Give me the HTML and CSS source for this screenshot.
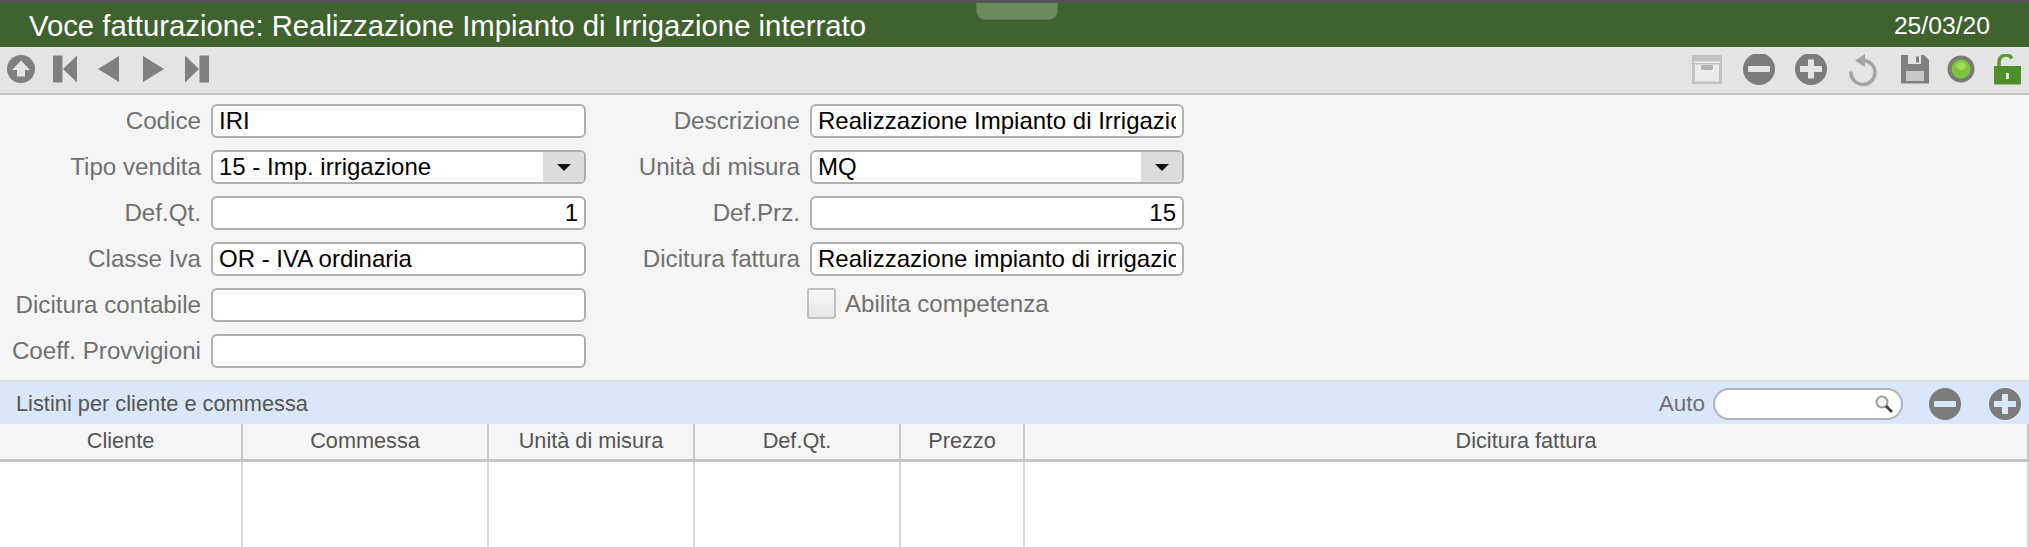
FILE: index.html
```html
<!DOCTYPE html>
<html lang="it">
<head>
<meta charset="utf-8">
<title>Voce fatturazione</title>
<link rel="stylesheet" href="styles.css">
</head>
<body>
<div class="page">
  <header class="titlebar">
    <div class="grabber"></div>
    <h1 class="title">Voce fatturazione: Realizzazione Impianto di Irrigazione interrato</h1>
    <span class="date">25/03/20</span>
  </header>

  <nav class="toolbar">
    <div class="tools-left">
      <svg class="icon" viewBox="0 0 42 32"><circle cx="21" cy="15" r="14" fill="#808080"/><path d="M21 6.500 30 16h-5v6.500h-8V16h-5z" fill="#e4e4e4"/></svg>
      <svg class="icon" viewBox="0 0 42 32"><path d="M9 1.500h9.500v27H9zM33 1.500v27L19 15z" fill="#808080"/></svg>
      <svg class="icon" viewBox="0 0 42 32"><path d="M31 2v26L10 15z" fill="#808080"/></svg>
      <svg class="icon" viewBox="0 0 42 32"><path d="M11 2v26l21-13z" fill="#808080"/></svg>
      <svg class="icon" viewBox="0 0 42 32"><path d="M23.500 1.500H33v27h-9.500zM9 1.500v27L23 15z" fill="#808080"/></svg>
    </div>
    <div class="tools-right">
      <div class="tool-group">
        <svg class="icon-r" viewBox="0 0 36 32"><path d="M3 1h30v29H3z" fill="#c2c2c2"/><path d="M5 7.500h26V9H5zM6 10.500h24V27.500H6z" fill="#ececec"/><path d="M12 11h12v3.500a1.500 1.500 0 0 1-1.500 1.500h-9a1.500 1.500 0 0 1-1.500-1.500z" fill="#b4b4b4"/></svg>
        <svg class="icon-r" viewBox="0 0 36 32"><circle cx="18" cy="15" r="16" fill="#7c7c7c"/><rect x="7" y="12" width="22" height="6" rx="1" fill="#e4e4e4"/></svg>
        <svg class="icon-r" viewBox="0 0 36 32"><circle cx="18" cy="15" r="16" fill="#7c7c7c"/><path d="M15 5.500h6V12h8v6h-8v6.500h-6V18H7v-6h8z" fill="#e4e4e4"/></svg>
        <svg class="icon-r" viewBox="0 0 36 32"><path d="M18 6.500a12 12 0 1 1-12 11" fill="none" stroke="#a4a4a4" stroke-width="3.500"/><path d="M20 0v13L10 6.500z" fill="#a4a4a4"/></svg>
      </div>
      <div class="tool-group tight">
        <svg class="icon-r" viewBox="0 0 36 32"><path d="M4 1h23l5 5v23.500H4z" fill="#808080"/><path d="M11 1h13v9H11z" fill="#e4e4e4"/><path d="M19 2.500h3v6h-3z" fill="#808080"/><path d="M9 17h18v10H9z" fill="#c8c8c8"/></svg>
        <svg class="icon-r" viewBox="0 0 36 32"><circle cx="18" cy="15" r="13.500" fill="#787c74"/><circle cx="18" cy="15" r="9.500" fill="#7dc53a"/><ellipse cx="18" cy="12" rx="5" ry="4" fill="#9adf50"/></svg>
        <svg class="icon-r" viewBox="0 0 36 32"><path d="M10 13V8a7 7 0 0 1 13-3.500" fill="none" stroke="#5a9a2e" stroke-width="3.500"/><path d="M5 12h27v17a1.500 1.500 0 0 1-1.500 1.500h-24A1.500 1.500 0 0 1 5 29z" fill="#4f8f29"/><rect x="17" y="19" width="3" height="6" fill="#e4e4e4"/></svg>
      </div>
    </div>
  </nav>

  <form class="form">
    <label class="lbl">Codice</label>
    <input class="field" readonly value="IRI">
    <label class="lbl">Descrizione</label>
    <input class="field" readonly value="Realizzazione Impianto di Irrigazione interrato">

    <label class="lbl">Tipo vendita</label>
    <div class="combo"><span class="combo-val">15 - Imp. irrigazione</span><span class="combo-btn"><i class="caret"></i></span></div>
    <label class="lbl">Unità di misura</label>
    <div class="combo"><span class="combo-val">MQ</span><span class="combo-btn"><i class="caret"></i></span></div>

    <label class="lbl">Def.Qt.</label>
    <input class="field num" readonly value="1">
    <label class="lbl">Def.Prz.</label>
    <input class="field num" readonly value="15">

    <label class="lbl">Classe Iva</label>
    <input class="field" readonly value="OR - IVA ordinaria">
    <label class="lbl">Dicitura fattura</label>
    <input class="field" readonly value="Realizzazione impianto di irrigazione interrato">

    <label class="lbl">Dicitura contabile</label>
    <input class="field" readonly>
    <span></span>
    <div class="check-row"><span class="check"></span><span class="check-text">Abilita competenza</span></div>

    <label class="lbl">Coeff. Provvigioni</label>
    <input class="field" readonly>
  </form>

  <section class="band">
    <span class="band-title">Listini per cliente e commessa</span>
    <div class="band-tools">
      <span class="auto">Auto</span>
      <div class="search">
        <svg class="lens" viewBox="0 0 18 18"><circle cx="7" cy="7" r="5.500" fill="#f4f4f4" stroke="#9a9a9a" stroke-width="2"/><path d="m11 11 6 6" stroke="#444" stroke-width="3"/></svg>
      </div>
      <div class="band-btns">
        <svg class="icon-b" viewBox="0 0 32 32"><circle cx="16" cy="16" r="16" fill="#7c7c7c"/><rect x="5" y="13" width="22" height="6" rx="1" fill="#dae7f9"/></svg>
        <svg class="icon-b" viewBox="0 0 32 32"><circle cx="16" cy="16" r="16" fill="#7c7c7c"/><path d="M13 6h6v7h8v6h-8v7h-6v-7H5v-6h8z" fill="#dae7f9"/></svg>
      </div>
    </div>
  </section>

  <section class="table">
    <div class="th">Cliente</div>
    <div class="th">Commessa</div>
    <div class="th">Unità di misura</div>
    <div class="th">Def.Qt.</div>
    <div class="th">Prezzo</div>
    <div class="th">Dicitura fattura</div>
    <div class="td"></div>
    <div class="td"></div>
    <div class="td"></div>
    <div class="td"></div>
    <div class="td"></div>
    <div class="td"></div>
  </section>
</div>
</body>
</html>
```

FILE: styles.css
```css
* { box-sizing: border-box; }
html, body { margin: 0; height: 100%; overflow: hidden; }
body { font-family: "Liberation Sans", Arial, sans-serif; background: #f5f5f5; }
.page { height: 547px; display: flex; flex-direction: column; }

.titlebar {
  position: relative;
  height: 47px;
  flex: none;
  background: #3f632f;
  border-top: 3px solid #555555;
  color: #fff;
  display: flex;
  align-items: center;
  justify-content: space-between;
  padding: 2px 39px 0 29px;
}
.title { margin: 0; font-size: 29.3px; font-weight: 400; line-height: 38px; }
.date { font-size: 24.7px; }
.grabber {
  position: absolute;
  top: 0;
  left: 976px;
  width: 82px;
  height: 17px;
  background: #6a8a60;
  border: 1px solid #587a4c;
  border-top: 0;
  border-radius: 0 0 9px 9px;
}

.toolbar {
  height: 48px;
  flex: none;
  background: #e4e4e4;
  border-bottom: 2px solid #c4c4c4;
  display: flex;
  align-items: center;
  justify-content: space-between;
  padding: 0 4px 0 0;
}
.tools-left { display: flex; gap: 2px; }
.tools-right { display: flex; gap: 16px; }
.tool-group { display: flex; gap: 16px; }
.tool-group.tight { gap: 10px; }
.icon { width: 42px; height: 32px; display: block; filter: blur(.6px); }
.icon-r { width: 36px; height: 32px; display: block; filter: blur(.6px); }

.form {
  height: 285px;
  flex: none;
  display: grid;
  grid-template-columns: 201px 385px 214px 384px;
  grid-auto-rows: 46px;
  padding-top: 3px;
  align-items: center;
  background: #f5f5f5;
}
.lbl { font-size: 24.2px; color: #707070; text-align: right; white-space: nowrap; }
.form > .field, .form > .combo { margin-left: 10px; }
.field, .combo {
  height: 34px;
  border: 2px solid #b0b0b0;
  border-radius: 6px;
  background: #fff;
  font-family: inherit;
  font-size: 24px;
  color: #000;
}
.field { padding: 0 6px; outline: none; width: calc(100% - 10px); }
.num { text-align: right; }
.combo { display: flex; align-items: center; overflow: hidden; width: calc(100% - 10px); }
.combo-val { flex: 1; padding-left: 6px; }
.combo-btn { width: 41px; height: 100%; background: #dcdcdc; display: flex; align-items: center; justify-content: center; }
.caret { width: 0; height: 0; border-left: 7px solid transparent; border-right: 7px solid transparent; border-top: 7px solid #111; }

.check-row { display: flex; align-items: center; gap: 9px; margin: 0 0 3px 7px; }
.check { width: 29px; height: 31px; border: 2px solid #c0c0c0; border-radius: 3px; background: linear-gradient(#f8f8f8, #e6e6e6); }
.check-text { font-size: 24.1px; color: #707070; }

.band {
  height: 44px;
  flex: none;
  background: #dae7f9;
  border-top: 2px solid #e0e0e0;
  display: flex;
  align-items: center;
  justify-content: space-between;
  padding: 2px 8px 0 16px;
}
.band-title { font-size: 21.8px; color: #555; }
.band-tools { display: flex; align-items: center; }
.auto { font-size: 22.5px; color: #707070; margin-right: 8px; }
.search {
  width: 190px;
  height: 32px;
  border: 2px solid #aeb4be;
  border-radius: 16px;
  background: #fff;
  display: flex;
  align-items: center;
  justify-content: flex-end;
  padding-right: 8px;
}
.lens { width: 18px; height: 18px; display: block; }
.band-btns { display: flex; gap: 28px; margin-left: 26px; }
.icon-b { width: 32px; height: 32px; display: block; filter: blur(.6px); }

.table {
  flex: 1;
  display: grid;
  grid-template-columns: 243px 246px 206px 206px 124px 1004px;
  grid-template-rows: 38px 1fr;
}
.th {
  background: #f5f5f5;
  border-right: 2px solid #c8c8c8;
  border-bottom: 3px solid #c4c4c4;
  font-size: 21.7px;
  color: #555;
  text-align: center;
  line-height: 33px;
}
.td { background: #fff; border-right: 2px solid #d6d6d6; }
```
